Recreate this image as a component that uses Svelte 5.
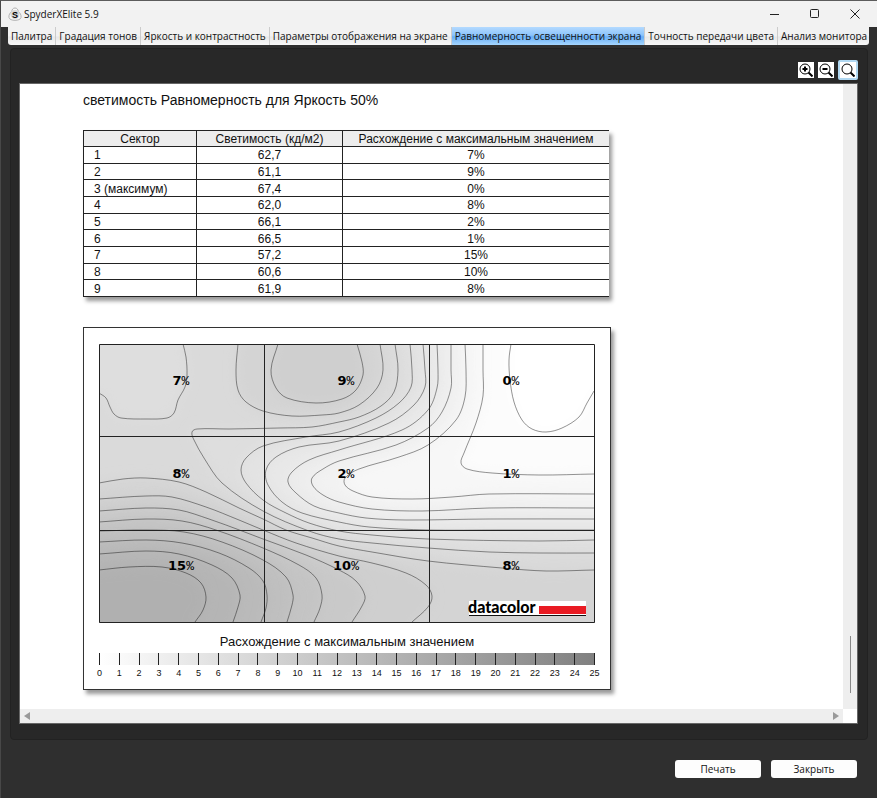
<script lang="ts">
    type Point = [number, number];
    type Contour = { level: number; points: Point[]; outer: Point[] };

    const tabs = [
        'Палитра',
        'Градация тонов',
        'Яркость и контрастность',
        'Параметры отображения на экране',
        'Равномерность освещенности экрана',
        'Точность передачи цвета',
        'Анализ монитора'
    ];
    let activeTab = $state(4);
    let zoomMode = $state('fit');

    const rows = [
        { sector: '1', luminance: '62,7', diff: 7 },
        { sector: '2', luminance: '61,1', diff: 9 },
        { sector: '3 (максимум)', luminance: '67,4', diff: 0 },
        { sector: '4', luminance: '62,0', diff: 8 },
        { sector: '5', luminance: '66,1', diff: 2 },
        { sector: '6', luminance: '66,5', diff: 1 },
        { sector: '7', luminance: '57,2', diff: 15 },
        { sector: '8', luminance: '60,6', diff: 10 },
        { sector: '9', luminance: '61,9', diff: 8 }
    ];

    const ticks = Array.from({ length: 26 }, (_, i) => i);

    // corners outside the plot, used to close the areas behind each line
    const topRight: Point = [540, -40];
    const bottomLeft: Point = [-40, 320];
    const bottomRight: Point = [540, 320];

    const contours: Contour[] = [
        { level: 7, outer: [[540, 209], topRight, [296, -40]], points: [[296, 0], [299, 26], [295, 48], [282, 62], [260, 73], [240, 78], [213, 83], [180, 84], [130, 85], [98, 85], [93, 88], [95, 96], [105, 114], [123, 139], [164, 167], [210, 187], [240, 195], [273, 199], [329, 204], [390, 208], [440, 209], [495, 209]] },
        { level: 6, outer: [[540, 196], topRight, [311, -40]], points: [[311, 0], [313, 26], [312, 43], [300, 59], [277, 74], [240, 88], [207, 93], [164, 102], [147, 114], [142, 126], [147, 139], [164, 156], [187, 169], [210, 179], [240, 187], [273, 191], [329, 195], [440, 197], [495, 196]] },
        { level: 5, outer: [[540, 186], topRight, [324, -40]], points: [[324, 0], [326, 26], [326, 43], [315, 61], [290, 79], [240, 97], [200, 103], [177, 113], [167, 126], [169, 141], [183, 158], [203, 169], [240, 178], [270, 183], [329, 186], [400, 186], [495, 186]] },
        { level: 4, outer: [[540, 175], topRight, [338, -40]], points: [[338, 0], [339, 26], [338, 44], [329, 66], [303, 86], [240, 106], [210, 116], [193, 128], [189, 138], [197, 149], [215, 162], [240, 169], [267, 174], [307, 176], [390, 175], [495, 175]] },
        { level: 3, outer: [[540, 164], topRight, [352, -40]], points: [[352, 0], [352, 26], [352, 44], [343, 68], [329, 84], [297, 101], [240, 117], [224, 125], [213, 134], [214, 142], [224, 151], [240, 158], [273, 165], [323, 167], [390, 164], [495, 164]] },
        { level: 2, outer: [[540, 150], topRight, [366, -40]], points: [[366, 0], [367, 26], [366, 53], [357, 76], [329, 101], [300, 113], [260, 125], [246, 134], [246, 141], [254, 147], [273, 153], [313, 155], [353, 153], [390, 150], [495, 150]] },
        { level: 1, outer: [[540, 130], topRight, [384, -40]], points: [[384, 0], [384, 26], [384, 52], [377, 79], [365, 109], [362, 119], [368, 125], [393, 129], [440, 131], [495, 130]] },
        { level: 0, outer: [[540, 0], topRight, [412, -40]], points: [[412, 0], [410, 16], [411, 36], [415, 58], [423, 76], [433, 85], [447, 88], [463, 84], [480, 73], [488, 59], [495, 47]] },
        { level: 8, outer: [[540, 226], bottomRight, bottomLeft, [-40, 139]], points: [[0, 139], [24, 135], [47, 134], [80, 138], [107, 148], [140, 164], [164, 175], [187, 186], [213, 194], [240, 202], [273, 208], [329, 217], [403, 224], [447, 227], [495, 226]] },
        { level: 9, outer: [[313, 320], bottomLeft, [-40, 155]], points: [[0, 155], [47, 152], [73, 153], [107, 163], [140, 176], [164, 186], [197, 199], [240, 212], [273, 219], [307, 229], [327, 241], [333, 252], [329, 263], [313, 278]] },
        { level: 10, outer: [[253, 320], bottomLeft, [-40, 167]], points: [[0, 167], [47, 164], [80, 166], [110, 175], [143, 187], [164, 195], [207, 211], [240, 226], [257, 237], [266, 252], [263, 262], [253, 278]] },
        { level: 11, outer: [[215, 320], bottomLeft, [-40, 178]], points: [[0, 178], [47, 175], [83, 177], [117, 186], [164, 204], [200, 221], [217, 234], [223, 251], [221, 264], [215, 278]] },
        { level: 12, outer: [[188, 320], bottomLeft, [-40, 187]], points: [[0, 187], [47, 186], [85, 188], [123, 198], [164, 216], [187, 233], [194, 251], [193, 261], [188, 278]] },
        { level: 13, outer: [[162, 320], bottomLeft, [-40, 198]], points: [[0, 198], [47, 196], [83, 199], [120, 209], [150, 224], [164, 237], [168, 251], [167, 264], [162, 278]] },
        { level: 14, outer: [[134, 320], bottomLeft, [-40, 210]], points: [[0, 210], [47, 207], [80, 210], [113, 221], [133, 234], [141, 251], [139, 263], [134, 278]] },
        { level: 15, outer: [[96, 320], bottomLeft, [-40, 226]], points: [[0, 226], [30, 223], [63, 223], [87, 229], [102, 239], [107, 253], [104, 266], [96, 278]] },
        { level: 8, outer: [[281, -40], [139, -40]], points: [[139, 0], [137, 26], [139, 46], [147, 58], [164, 67], [193, 72], [223, 71], [240, 69], [260, 61], [278, 44], [284, 26], [281, 0]] },
        { level: 9, outer: [[258, -40], [179, -40]], points: [[179, 0], [172, 26], [177, 44], [188, 54], [217, 59], [243, 55], [257, 46], [264, 31], [263, 18], [258, 0]] },
        { level: 7, outer: [[84, -40], [-40, -40], [-40, 49]], points: [[0, 49], [7, 54], [11, 63], [15, 70], [22, 74], [48, 75], [68, 74], [75, 69], [79, 56], [86, 43], [88, 31], [87, 13], [84, 0]] }
    ];

    const sectorLabels = [
        { x: 82, y: 41 }, { x: 247, y: 41 }, { x: 412, y: 41 },
        { x: 82, y: 134 }, { x: 247, y: 134 }, { x: 412, y: 134 },
        { x: 82, y: 226 }, { x: 247, y: 226 }, { x: 412, y: 226 }
    ];

    function handle(from: Point, prev: Point, next: Point, length: number) {
        const dx = next[0] - prev[0];
        const dy = next[1] - prev[1];
        const k = length / (Math.hypot(dx, dy) || 1);
        return `${(from[0] + dx * k).toFixed(1)} ${(from[1] + dy * k).toFixed(1)}`;
    }

    function smooth(points: Point[]) {
        let d = `M${points[0][0]} ${points[0][1]}`;
        for (let i = 0; i < points.length - 1; i++) {
            const p0 = points[i - 1] ?? points[i];
            const p1 = points[i];
            const p2 = points[i + 1];
            const p3 = points[i + 2] ?? p2;
            const third = Math.hypot(p2[0] - p1[0], p2[1] - p1[1]) / 3;
            d += `C${handle(p1, p0, p2, third)} ${handle(p2, p3, p1, third)} ${p2[0]} ${p2[1]}`;
        }
        return d;
    }

    function area(contour: Contour) {
        return smooth(contour.points) + contour.outer.map((p) => `L${p[0]} ${p[1]}`).join('') + 'Z';
    }

    function shade(contour: Contour) {
        // the middle of the band that starts at this line
        const value = contour.level > 7 ? contour.level + 0.5 : Math.max(contour.level - 0.5, 0);
        const v = Math.round(255 - value * 5.1);
        return `rgb(${v}, ${v}, ${v})`;
    }
</script>

<div class="window">
    <header class="titlebar">
        <svg class="app-icon" viewBox="0 0 14 14" width="14" height="14">
            <path d="M7 1C9 1 10 2.500 10.300 4.500C12 6 13.500 8 13 10.500C12.500 12.500 10 13.300 7 13.300S1.500 12.500 1 10.500C.5 8 2 6 3.700 4.500C4 2.500 5 1 7 1Z" fill="#f8f8f8" stroke="#b0b0b0" />
            <circle cx="7" cy="7.500" r="4.500" fill="#d8d8d8" />
            <text x="7" y="11" text-anchor="middle">S</text>
        </svg>
        <h1>SpyderXElite 5.9</h1>
        <div class="window-buttons">
            <button aria-label="Свернуть">
                <svg viewBox="0 0 10 10" width="10" height="10"><path d="M0 5.500H9" /></svg>
            </button>
            <button aria-label="Развернуть">
                <svg viewBox="0 0 10 10" width="10" height="10"><rect x=".5" y=".5" width="8" height="8" rx="1" /></svg>
            </button>
            <button aria-label="Закрыть окно">
                <svg viewBox="0 0 10 10" width="10" height="10"><path d="M.5 .5L9.500 9.500M9.500 .5L.5 9.500" /></svg>
            </button>
        </div>
    </header>

    <div class="tabs" role="tablist">
        {#each tabs as tab, i}
            <button role="tab" class="tab" class:active={i === activeTab} aria-selected={i === activeTab} onclick={() => (activeTab = i)}>
                {tab}
            </button>
        {/each}
    </div>

    <main class="panel">
        <div class="toolbar">
            <button class:selected={zoomMode === 'in'} aria-label="Увеличить" onclick={() => (zoomMode = 'in')}>
                <svg viewBox="0 0 14 14" width="14" height="14">
                    <circle cx="6" cy="6" r="5" />
                    <path d="M3.500 6H8.500M6 3.500V8.500" stroke-width="2" />
                    <path d="M9.500 9.500L13.500 13.500" stroke-width="2" />
                </svg>
            </button>
            <button class:selected={zoomMode === 'out'} aria-label="Уменьшить" onclick={() => (zoomMode = 'out')}>
                <svg viewBox="0 0 14 14" width="14" height="14">
                    <circle cx="6" cy="6" r="5" />
                    <path d="M3.500 6H8.500" stroke-width="2" />
                    <path d="M9.500 9.500L13.500 13.500" stroke-width="2" />
                </svg>
            </button>
            <button class:selected={zoomMode === 'fit'} aria-label="По размеру" onclick={() => (zoomMode = 'fit')}>
                <svg viewBox="0 0 14 14" width="14" height="14">
                    <circle cx="6" cy="6" r="5" />
                    <path d="M9.500 9.500L13.500 13.500" stroke-width="2" />
                </svg>
            </button>
        </div>

        <div class="viewer">
            <article class="report">
                <h2>светимость Равномерность для Яркость 50%</h2>

                <table>
                    <thead>
                        <tr>
                            <th class="col-sector">Сектор</th>
                            <th class="col-luminance">Светимость (кд/м2)</th>
                            <th>Расхождение с максимальным значением</th>
                        </tr>
                    </thead>
                    <tbody>
                        {#each rows as row}
                            <tr>
                                <td class="sector">{row.sector}</td>
                                <td>{row.luminance}</td>
                                <td>{row.diff}%</td>
                            </tr>
                        {/each}
                    </tbody>
                </table>

                <figure>
                    <svg class="plot" viewBox="0 0 496 279">
                        <defs>
                            <filter id="soften" x="-10%" y="-10%" width="120%" height="120%">
                                <feGaussianBlur stdDeviation="6" />
                            </filter>
                        </defs>
                        <rect width="496" height="279" fill="#dadada" />
                        {#each contours as contour}
                            <path d={area(contour)} fill={shade(contour)} filter="url(#soften)" />
                        {/each}
                        {#each contours as contour}
                            <path class="contour" d={smooth(contour.points)} />
                        {/each}
                        <path class="sectors" d="M.5 .5H495.500V278.500H.5ZM165.500 0V279M330.500 0V279M0 92.500H496M0 186.500H496" />
                        {#each sectorLabels as label, i}
                            <text class="label" x={label.x} y={label.y}>{rows[i].diff}<tspan>%</tspan></text>
                        {/each}
                        <rect x="370" y="257" width="117" height="15" fill="#fff" />
                        <text class="brand" x="369" y="269">datacolor</text>
                        <rect x="440" y="262" width="47" height="8" fill="#e91b23" />
                        <rect x="370" y="271" width="117" height="1" fill="#111" />
                    </svg>
                    <figcaption>Расхождение с максимальным значением</figcaption>
                    <ol class="scale">
                        {#each ticks as tick}
                            <li><span>{tick}</span></li>
                        {/each}
                    </ol>
                </figure>
            </article>
            <div class="scroll-y"><div class="thumb"></div></div>
            <div class="scroll-x">
                <svg viewBox="0 0 6 8" width="6" height="8"><path d="M6 0V8L0 4Z" /></svg>
                <svg viewBox="0 0 6 8" width="6" height="8"><path d="M0 0V8L6 4Z" /></svg>
            </div>
        </div>
    </main>

    <footer>
        <button>Печать</button>
        <button>Закрыть</button>
    </footer>
</div>

<style>
    :global(body) {
        margin: 0;
        background: #2f2f2f;
    }
    .window {
        display: flex;
        flex-direction: column;
        height: 100vh;
        box-sizing: border-box;
        border-top: 1px solid #5c5c5c;
        border-left: 1px solid #484848;
        background: #2f2f2f;
        color: #111;
        font-family: "Open Sans", "Noto Sans", sans-serif;
        font-size: 10px;
    }
    button {
        font: inherit;
        color: inherit;
        padding: 0;
        border: none;
    }
    .titlebar {
        display: flex;
        align-items: center;
        flex: none;
        height: 26px;
        padding: 0 2px 0 7px;
        background: #f2f2f2;
    }
    .app-icon text {
        font: bold 9px "Liberation Sans", sans-serif;
    }
    h1 {
        margin: 0 auto 0 2px;
        font-size: 10px;
        font-weight: 400;
    }
    .window-buttons {
        display: flex;
    }
    .window-buttons button {
        display: flex;
        align-items: center;
        justify-content: center;
        width: 40px;
        height: 24px;
        background: none;
    }
    .window-buttons svg {
        fill: none;
        stroke: #222;
    }

    .tabs {
        display: flex;
        flex: none;
        height: 18px;
        margin: 0 8px 0 7px;
        overflow: hidden;
        border-radius: 0 0 3px 3px;
    }
    .tab {
        flex: 1 0 auto;
        padding: 0 3px;
        border-right: 1px solid #ccc;
        background: linear-gradient(#f2f2f2 50%, #e8e8e8 55%, #f8f8f8);
        line-height: 18px;
        white-space: nowrap;
    }
    .tab:last-child {
        border-right: none;
    }
    .tab.active {
        background: linear-gradient(#b4daff, #8cc4fb 45%, #68aef5 55%, #a5d6ff);
    }

    .panel {
        display: flex;
        flex-direction: column;
        flex: 1;
        min-height: 0;
        margin: 3px 9px 0;
        padding: 11px 9px 15px;
        border: 1px solid #222;
        border-radius: 4px;
        background: #282828;
    }
    .toolbar {
        display: flex;
        align-items: center;
        justify-content: flex-end;
        gap: 4px;
        flex: none;
        height: 20px;
        margin-bottom: 3px;
    }
    .toolbar button {
        display: flex;
        padding: 1px;
        background: #fff;
    }
    .toolbar button.selected {
        padding: 1px;
        border: 2px solid #b0d8f2;
        border-radius: 2px;
    }
    .toolbar svg {
        fill: none;
        stroke: #000;
    }

    .viewer {
        display: grid;
        grid-template: minmax(0, 1fr) 14px / minmax(0, 1fr) 14px;
        flex: 1;
        min-height: 0;
        margin-left: -1px;
        border: 1px solid #666;
        background: #fff;
    }
    .report {
        padding: 8px 20px 0 63px;
        overflow: hidden;
        font-family: "Liberation Sans", Arial, sans-serif;
    }
    .scroll-y {
        display: flex;
        flex-direction: column;
        align-items: center;
        justify-content: flex-end;
        padding-bottom: 16px;
        background: #eee;
    }
    .thumb {
        width: 1px;
        height: 57px;
        background: #888;
    }
    .scroll-x {
        display: flex;
        align-items: center;
        justify-content: space-between;
        padding: 0 4px;
        background: #eee;
    }
    .scroll-x path {
        fill: #999;
    }

    h2 {
        margin: 0 0 22px;
        font-size: 14px;
        font-weight: 400;
        line-height: 16px;
    }
    table {
        width: 100%;
        max-width: 526px;
        height: 167px;
        table-layout: fixed;
        border-collapse: collapse;
        border: 1px solid #222;
        border-right: none;
        box-shadow: 3px 4px 4px #999;
        font-size: 12px;
        line-height: 14px;
        text-align: center;
    }
    th,
    td {
        padding: 1px 0 0;
        border: 1px solid #222;
        border-right: none;
        font-weight: 400;
    }
    th {
        background: #ededed;
    }
    .col-sector {
        width: 112px;
    }
    .col-luminance {
        width: 145px;
    }
    .sector {
        padding-left: 10px;
        text-align: left;
    }

    figure {
        width: 100%;
        max-width: 528px;
        box-sizing: border-box;
        margin: 30px 0 0;
        padding: 16px 15px 10px 15px;
        border: 1px solid #333;
        box-shadow: 3px 4px 4px #999;
    }
    .plot {
        display: block;
        width: 100%;
    }
    .contour {
        fill: none;
        stroke: #000;
        stroke-opacity: 0.42;
    }
    .sectors {
        fill: none;
        stroke: #222;
    }
    .label {
        font: bold 13px "DejaVu Sans", sans-serif;
        text-anchor: middle;
    }
    .label tspan {
        font: 13px "Liberation Mono", monospace;
    }
    .brand {
        font: 900 16px Lato, sans-serif;
    }
    figcaption {
        margin: 10px 0 2px;
        font-size: 13px;
        line-height: 18px;
        text-align: center;
    }
    .scale {
        display: flex;
        justify-content: space-between;
        height: 12px;
        margin: 0 0 14px;
        padding: 0;
        list-style: none;
        background: linear-gradient(90deg, #fff, #808080);
        font-size: 9px;
    }
    .scale li {
        display: flex;
        justify-content: center;
        width: 1px;
        background: #222;
    }
    .scale span {
        margin-top: 14px;
        line-height: 12px;
    }

    footer {
        display: flex;
        justify-content: flex-end;
        gap: 10px;
        flex: none;
        padding: 20px 20px 20px;
    }
    footer button {
        width: 86px;
        height: 18px;
        border-radius: 3px;
        background: #fdfdfd;
        line-height: 16px;
    }
</style>
